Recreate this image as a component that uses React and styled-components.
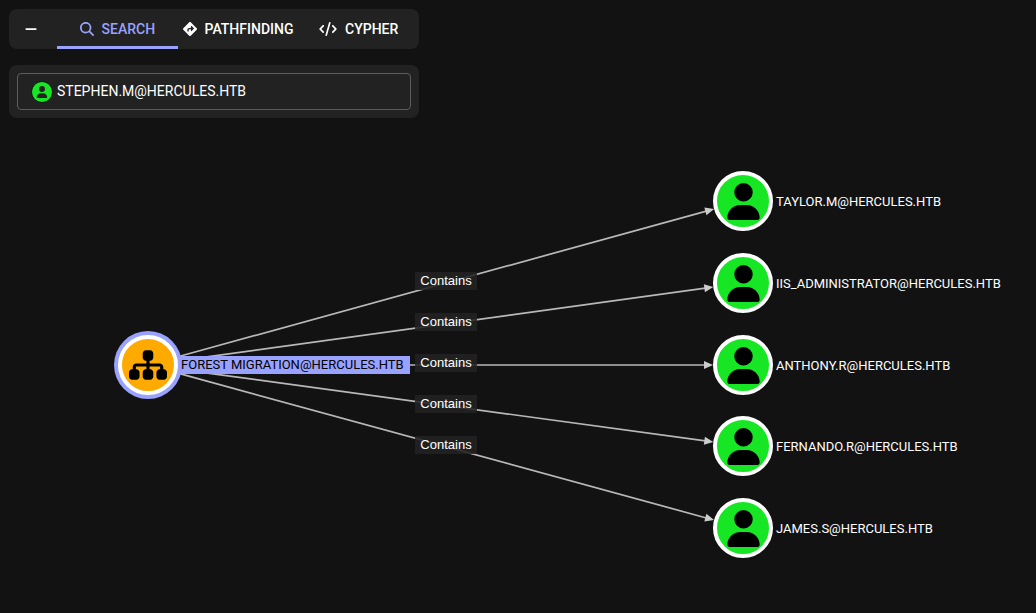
import React, { useState } from "react";
import styled, { createGlobalStyle } from "styled-components";
import {
  FaCode,
  FaDiamondTurnRight,
  FaMagnifyingGlass,
  FaMinus,
  FaSitemap,
  FaUser,
} from "react-icons/fa6";

const GlobalStyle = createGlobalStyle`
  *, *::before, *::after { box-sizing: border-box; }
  body {
    margin: 0;
    background: #121212;
    color: #ffffff;
    font-family: Roboto, "Liberation Sans", sans-serif;
  }
`;

const Page = styled.main`
  position: relative;
  min-height: 100vh;
  overflow: hidden;
  padding: 9px;
`;

const Controls = styled.section`
  position: relative;
  z-index: 2;
  display: flex;
  flex-direction: column;
  gap: 16px;
  width: 100%;
  max-width: 410px;
`;

const Panel = styled.div`
  background: #222222;
  border-radius: 8px;
`;

const TabBar = styled(Panel)`
  display: flex;
  height: 40px;
  overflow: hidden;
`;

const CollapseButton = styled.button`
  display: flex;
  align-items: center;
  justify-content: center;
  width: 44px;
  margin-right: 4px;
  padding: 0;
  border: 0;
  background: none;
  color: #ffffff;
  font-size: 14px;
  cursor: pointer;
`;

const Tabs = styled.div`
  display: flex;
  flex: 1;
`;

const Tab = styled.button`
  display: flex;
  flex: 1 1 0;
  align-items: center;
  justify-content: center;
  gap: 8px;
  min-width: 0;
  padding: 3px 0 0;
  border: 0;
  border-bottom: 3px solid ${(p) => (p.$active ? "#99a3ff" : "transparent")};
  background: none;
  color: ${(p) => (p.$active ? "#99a3ff" : "#ffffff")};
  font-family: inherit;
  font-size: 14px;
  font-weight: 500;
  line-height: 20px;
  white-space: nowrap;
  cursor: pointer;

  svg {
    flex: none;
    width: ${(p) => p.$iconWidth}px;
    height: 14px;
  }
`;

const SearchPanel = styled(Panel)`
  padding: 8px;
`;

const SearchField = styled.label`
  display: flex;
  align-items: center;
  gap: 4px;
  height: 37px;
  padding: 0 13px;
  border: 1px solid #5c5c5c;
  border-radius: 4px;
`;

const KindBadge = styled.span`
  display: flex;
  flex: none;
  align-items: center;
  justify-content: center;
  width: 22px;
  height: 22px;
  border: 1px solid #121212;
  border-radius: 50%;
  background: #17e625;
  color: #222222;
  font-size: 12px;
`;

const SearchInput = styled.input`
  flex: 1;
  min-width: 0;
  padding: 0 0 2px;
  border: 0;
  outline: 0;
  background: none;
  color: #ffffff;
  font-family: inherit;
  font-size: 14px;
  line-height: 20px;
`;

const Graph = styled.section`
  position: absolute;
  inset: 0;
`;

const Edges = styled.svg`
  position: absolute;
  inset: 0;
  width: 100%;
  height: 100%;
`;

const Node = styled.div`
  position: absolute;
  left: ${(p) => p.$x}px;
  top: ${(p) => p.$y}px;
  display: flex;
  align-items: center;
  transform: translate(-30px, -50%);
`;

const Disc = styled.span`
  display: flex;
  flex: none;
  align-items: center;
  justify-content: center;
  width: 60px;
  height: 60px;
  border: 4px solid #ffffff;
  border-radius: 50%;
  background: ${(p) => p.$fill};
  box-shadow: ${(p) => (p.$selected ? "0 0 0 4px #99a3ff" : "none")};
  color: #000000;
  font-size: ${(p) => (p.$selected ? 38 : 37)}px;
`;

const NodeLabel = styled.span`
  padding: 0 3px;
  color: #ffffff;
  font-size: 13px;
  line-height: 17px;
  white-space: nowrap;
`;

const SelectedLabel = styled(NodeLabel)`
  padding: 0 6px 1px 3px;
  background: #99a3ff;
  color: #000000;
`;

const EdgeLabel = styled.span`
  position: absolute;
  left: ${(p) => p.$x}px;
  top: ${(p) => p.$y}px;
  width: 62px;
  background: rgba(34, 34, 34, 0.88);
  color: #ffffff;
  font-family: "Liberation Sans", Arial, sans-serif;
  font-size: 13px;
  line-height: 18px;
  text-align: center;
  transform: translate(-50%, -50%);
`;

const TABS = [
  { name: "SEARCH", Icon: FaMagnifyingGlass, iconWidth: 14 },
  { name: "PATHFINDING", Icon: FaDiamondTurnRight, iconWidth: 14 },
  { name: "CYPHER", Icon: FaCode, iconWidth: 18 },
];

const SOURCE = { x: 148, y: 365, label: "FOREST MIGRATION@HERCULES.HTB" };

const USERS = [
  { x: 743, y: 201, label: "TAYLOR.M@HERCULES.HTB" },
  { x: 743, y: 283, label: "IIS_ADMINISTRATOR@HERCULES.HTB" },
  { x: 743, y: 365, label: "ANTHONY.R@HERCULES.HTB" },
  { x: 743, y: 446, label: "FERNANDO.R@HERCULES.HTB" },
  { x: 743, y: 528, label: "JAMES.S@HERCULES.HTB" },
];

const NODE_RADIUS = 30;

function Edge({ from, to }) {
  const dx = to.x - from.x;
  const dy = to.y - from.y;
  const length = Math.hypot(dx, dy);
  const angle = (Math.atan2(dy, dx) * 180) / Math.PI;
  const tip = length - NODE_RADIUS;
  return (
    <g transform={`translate(${from.x} ${from.y}) rotate(${angle})`}>
      <line x1={NODE_RADIUS} x2={tip - 8} stroke="#b8b8b8" strokeWidth="1.7" />
      <path d={`M${tip} 0 L${tip - 9} -4 V4 Z`} fill="#cccccc" />
    </g>
  );
}

export default function App() {
  const [active, setActive] = useState("SEARCH");
  const [query, setQuery] = useState("STEPHEN.M@HERCULES.HTB");

  return (
    <>
      <GlobalStyle />
      <Page>
        <Graph aria-label="Graph">
          <Edges aria-hidden="true">
            {USERS.map((user) => (
              <Edge key={user.label} from={SOURCE} to={user} />
            ))}
          </Edges>
          <Node $x={SOURCE.x} $y={SOURCE.y}>
            <Disc $fill="#ffaa00" $selected>
              <FaSitemap />
            </Disc>
            <SelectedLabel>{SOURCE.label}</SelectedLabel>
          </Node>
          {USERS.map((user) => (
            <Node key={user.label} $x={user.x} $y={user.y}>
              <Disc $fill="#17e625">
                <FaUser />
              </Disc>
              <NodeLabel>{user.label}</NodeLabel>
            </Node>
          ))}
          {USERS.map((user) => (
            <EdgeLabel
              key={user.label}
              $x={Math.ceil((SOURCE.x + user.x) / 2)}
              $y={Math.ceil((SOURCE.y + user.y) / 2) - 2}
            >
              Contains
            </EdgeLabel>
          ))}
        </Graph>

        <Controls>
          <TabBar>
            <CollapseButton type="button" aria-label="Collapse">
              <FaMinus />
            </CollapseButton>
            <Tabs role="tablist">
              {TABS.map(({ name, Icon, iconWidth }) => (
                <Tab
                  key={name}
                  type="button"
                  role="tab"
                  aria-selected={active === name}
                  $active={active === name}
                  $iconWidth={iconWidth}
                  onClick={() => setActive(name)}
                >
                  <Icon />
                  {name}
                </Tab>
              ))}
            </Tabs>
          </TabBar>
          <SearchPanel>
            <SearchField>
              <KindBadge>
                <FaUser />
              </KindBadge>
              <SearchInput
                aria-label="Search nodes"
                value={query}
                onChange={(e) => setQuery(e.target.value)}
              />
            </SearchField>
          </SearchPanel>
        </Controls>
      </Page>
    </>
  );
}
